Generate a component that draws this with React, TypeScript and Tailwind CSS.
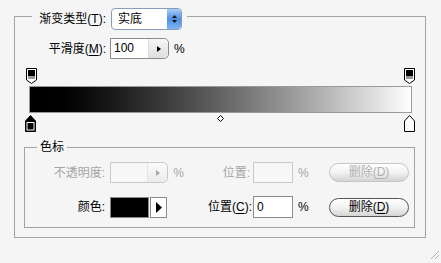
import React from "react";

const FONT = { fontFamily: '"Liberation Sans", "Noto Sans CJK SC", sans-serif' };

function Mn({ k }: { k: string }) {
  return <span className="underline underline-offset-2">{k}</span>;
}

function TopStop({ className }: { className: string }) {
  return (
    <svg className={`absolute ${className}`} width="11" height="16" viewBox="0 0 11 16">
      <path d="M0.5 0.5 H10.5 V12 L5.5 15.5 L0.5 12 Z" fill="#fff" stroke="#000" />
      <rect x="2" y="2" width="7" height="6" fill="#000" />
      <rect x="2" y="8" width="7" height="3" fill="#9a9a9a" />
    </svg>
  );
}

function BottomStop({ className, selected }: { className: string; selected?: boolean }) {
  return (
    <svg className={`absolute ${className}`} width="11" height="17" viewBox="0 0 11 17">
      <path
        d="M0.5 16.5 V6 L5.5 0.5 L10.5 6 V16.5 Z"
        fill={selected ? "#000" : "#fff"}
        stroke="#000"
      />
      <rect
        x="2"
        y="7.5"
        width="7"
        height="7.5"
        fill={selected ? "#000" : "#fff"}
        stroke={selected ? "#fff" : "none"}
      />
    </svg>
  );
}

function SpinInput({ value, disabled }: { value?: string; disabled?: boolean }) {
  return (
    <div
      className={`flex h-[21px] w-[59px] rounded-r-[5px] border ${
        disabled ? "border-[#c9c9c9] bg-[#f7f7f7]" : "border-[#8a8a8a] bg-white"
      }`}
    >
      <div className="flex-1 pl-[3px] text-[12px] leading-[19px]">{value}</div>
      <div
        className={`flex w-[20px] items-center justify-center rounded-r-[5px] border-l ${
          disabled
            ? "border-[#e4e4e4] bg-gradient-to-b from-[#fafafa] to-[#ececec]"
            : "border-[#dcdcdc] bg-gradient-to-b from-[#f7f7f7] to-[#dedede]"
        }`}
      >
        <svg width="4" height="6" viewBox="0 0 4 6">
          <path d="M0 0 L4 3 L0 6 Z" fill={disabled ? "#a8a8a8" : "#000"} />
        </svg>
      </div>
    </div>
  );
}

function PillButton({ disabled }: { disabled?: boolean }) {
  return (
    <button
      type="button"
      className={`h-[19px] w-[80px] rounded-full border bg-gradient-to-b from-white via-[#f2f2f2] to-[#d4d4d4] text-[12px] leading-[17px] ${
        disabled ? "border-[#c4c4c4] text-[#b0b0b0]" : "border-[#555] text-black"
      }`}
    >
      删除(<Mn k="D" />)
    </button>
  );
}

export default function App() {
  return (
    <div
      className="h-[263px] w-[441px] overflow-hidden bg-[#f5f5f5] text-[12px] text-black"
      style={FONT}
    >
      {/* Outer group */}
      <div className="relative ml-[14px] mt-[16px] h-[222px] w-[412px] border border-[#a3a3a3]">
        {/* Legend: gradient type */}
        <div className="absolute left-[17px] top-[-9px] flex items-center bg-[#f5f5f5] pl-[4px] pr-[5px]">
          <span className="w-[70px] whitespace-nowrap text-right">
            渐变类型(<Mn k="T" />):
          </span>
          <div className="ml-[5px] flex h-[22px] w-[71px] rounded-[4px] border border-[#8a9db8] bg-white">
            <span className="flex-1 pl-[6px] leading-[20px]">实底</span>
            <div className="flex w-[14px] flex-col items-center justify-center gap-[2px] rounded-r-[4px] bg-gradient-to-b from-[#a9cdf7] via-[#4f8fe6] to-[#7fb3f2]">
              <svg width="5" height="3" viewBox="0 0 5 3">
                <path d="M0 3 L2.5 0 L5 3 Z" fill="#111" />
              </svg>
              <svg width="5" height="3" viewBox="0 0 5 3">
                <path d="M0 0 L2.5 3 L5 0 Z" fill="#111" />
              </svg>
            </div>
          </div>
        </div>

        {/* Smoothness */}
        <div className="mt-[21px] flex items-center">
          <span className="w-[91px] text-right">
            平滑度(<Mn k="M" />):
          </span>
          <div className="ml-[4px]">
            <SpinInput value="100" />
          </div>
          <span className="ml-[5px]">%</span>
        </div>

        {/* Gradient bar with stops */}
        <div className="relative ml-[9px] mt-[9px] h-[64px] w-[393px] pt-[18px]">
          <TopStop className="left-[2px] top-0" />
          <TopStop className="left-[380px] top-0" />
          <div className="ml-[5px] h-[27px] w-[383px] border border-[#9a9a9a] bg-gradient-to-r from-black to-white" />
          <BottomStop className="left-[1px] top-[47px]" selected />
          <BottomStop className="left-[380px] top-[47px]" />
          <svg className="absolute left-[193px] top-[47px]" width="7" height="7" viewBox="0 0 7 7">
            <path d="M3.5 0.5 L6.5 3.5 L3.5 6.5 L0.5 3.5 Z" fill="#fff" stroke="#000" />
          </svg>
        </div>

        {/* Color stops group */}
        <div className="relative ml-[9px] mt-[15px] h-[81px] w-[391px] border border-[#a3a3a3]">
          <span className="absolute left-[12px] top-[-9px] bg-[#f5f5f5] px-[3px] leading-[16px]">
            色标
          </span>

          <div className="mt-[14px] flex items-center">
            <span className="w-[80px] text-right text-[#a5a5a5]">不透明度:</span>
            <div className="ml-[5px] flex w-[74px] items-center">
              <SpinInput disabled />
              <span className="ml-[5px] text-[#a5a5a5]">%</span>
            </div>
            <span className="w-[66px] text-right text-[#a5a5a5]">位置:</span>
            <div className="ml-[3px] h-[21px] w-[40px] border border-[#c9c9c9] bg-[#f7f7f7]" />
            <span className="ml-[5px] w-[31px] text-[#a5a5a5]">%</span>
            <PillButton disabled />
          </div>

          <div className="mt-[13px] flex items-center">
            <span className="w-[80px] text-right">颜色:</span>
            <div className="ml-[5px] flex w-[74px] items-center">
              <div className="h-[21px] w-[39px] border border-[#8a8a8a] bg-black" />
              <div className="ml-px flex h-[21px] w-[17px] items-center justify-center border border-[#8a8a8a] bg-white">
                <svg width="6" height="11" viewBox="0 0 6 11">
                  <path d="M0 0 L6 5.5 L0 11 Z" fill="#000" />
                </svg>
              </div>
            </div>
            <span className="w-[68px] whitespace-nowrap text-right">
              位置(<Mn k="C" />):
            </span>
            <div className="ml-px h-[22px] w-[40px] border border-[#8a8a8a] bg-white pl-[3px] leading-[20px]">
              0
            </div>
            <span className="ml-[5px] w-[31px]">%</span>
            <PillButton />
          </div>
        </div>
      </div>

      {/* Resize grip */}
      <div className="mt-[11px] flex justify-end pr-[1px]">
        <svg width="11" height="11" viewBox="0 0 11 11">
          <path d="M10 2 L2 10 M10 6 L6 10" stroke="#b0b0b0" strokeWidth="1" />
        </svg>
      </div>
    </div>
  );
}
